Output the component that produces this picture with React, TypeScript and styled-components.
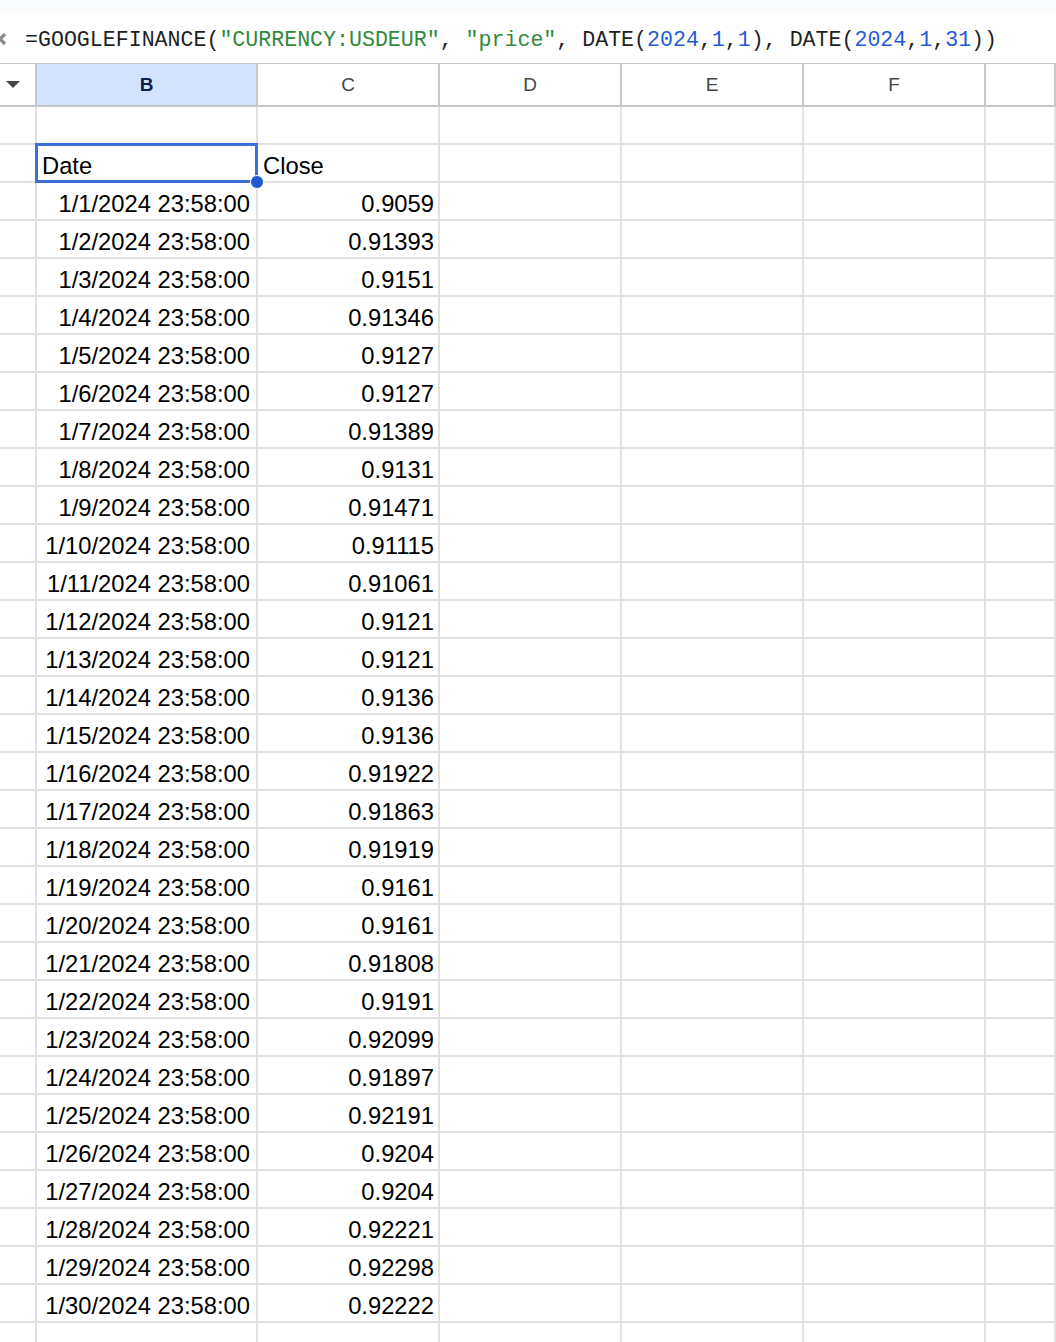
import React from "react";
import styled, { createGlobalStyle, css } from "styled-components";

const GlobalStyle = createGlobalStyle`
  html, body { margin: 0; padding: 0; background: #ffffff; }
  body { overflow: hidden; }
  * { box-sizing: border-box; }
`;

const Page = styled.div`
  width: 1056px;
  height: 1342px;
  overflow: hidden;
  background: #ffffff;
  font-family: "Liberation Sans", Arial, sans-serif;
`;

const TopStrip = styled.div`
  height: 13px;
  background: #f9fbfd;
`;

const FormulaBar = styled.div`
  height: 51px;
  display: flex;
  align-items: center;
  gap: 17px;
  padding-top: 3px;
  background: #ffffff;
  border-bottom: 1px solid #c7c7c7;
  font-family: "Liberation Mono", "DejaVu Sans Mono", monospace;
  font-size: 21.6px;
  color: #1f1f1f;
  white-space: nowrap;
`;

const FxClip = styled.div`
  width: 8px;
  height: 14px;
  overflow: hidden;
  flex: none;
  display: flex;
  justify-content: flex-end;
  margin-top: -2px;

  svg {
    flex: none;
  }
`;

const Tok = styled.span<{ $kind?: "str" | "num" }>`
  ${(p) =>
    p.$kind === "str" &&
    css`
      color: #318a3c;
    `}
  ${(p) =>
    p.$kind === "num" &&
    css`
      color: #1f5bd6;
    `}
`;

const Grid = styled.div`
  display: grid;
  grid-template-columns: 37px 221px 182px 182px 182px 182px 1fr;
  grid-template-rows: 43px;
  grid-auto-rows: 38px;
`;

const HeadCell = styled.div<{ $active?: boolean }>`
  height: 43px;
  border-right: 2px solid #c7c7c7;
  border-bottom: 2px solid #c7c7c7;
  display: flex;
  align-items: center;
  justify-content: center;
  font-size: 19px;
  color: #444746;
  background: ${(p) => (p.$active ? "#d3e3fd" : "#ffffff")};
  font-weight: ${(p) => (p.$active ? 700 : 400)};
  ${(p) =>
    p.$active &&
    css`
      color: #0b1f4c;
    `}
`;

const CornerCell = styled(HeadCell)`
  justify-content: flex-start;
  padding-left: 6px;
`;

const Cell = styled.div<{ $align?: "left" | "right"; $padRight?: number; $selected?: boolean }>`
  position: relative;
  height: 38px;
  border-right: 2px solid #e1e1e1;
  border-bottom: 2px solid #e1e1e1;
  display: flex;
  align-items: flex-end;
  justify-content: ${(p) => (p.$align === "right" ? "flex-end" : "flex-start")};
  padding: 0 ${(p) => p.$padRight ?? 5}px 1px 5px;
  font-size: 23.75px;
  color: #000000;
  white-space: nowrap;
  ${(p) =>
    p.$selected &&
    css`
      z-index: 2;
    `}
`;

const SelectionBox = styled.div`
  position: absolute;
  left: -2px;
  top: -2px;
  right: -2px;
  bottom: -2px;
  border: 3px solid #3d6fdb;
  pointer-events: none;
`;

const Handle = styled.div`
  position: absolute;
  right: -8.5px;
  bottom: -8.5px;
  width: 14px;
  height: 14px;
  border-radius: 50%;
  background: #1f5ad0;
  border: 1px solid #ffffff;
`;

const FxIcon = () => (
  <svg width="16" height="14" viewBox="0 0 16 14" aria-hidden="true">
    <path d="M3 2 L13 12 M13 2 L3 12" stroke="#8a8a8a" strokeWidth="3.2" fill="none" />
  </svg>
);

const Caret = () => (
  <svg width="14" height="8" viewBox="0 0 14 8" aria-hidden="true">
    <path d="M0 0 L14 0 L7 7 Z" fill="#444746" />
  </svg>
);

const closes = [
  "0.9059", "0.91393", "0.9151", "0.91346", "0.9127", "0.9127", "0.91389", "0.9131",
  "0.91471", "0.91115", "0.91061", "0.9121", "0.9121", "0.9136", "0.9136", "0.91922",
  "0.91863", "0.91919", "0.9161", "0.9161", "0.91808", "0.9191", "0.92099", "0.91897",
  "0.92191", "0.9204", "0.9204", "0.92221", "0.92298", "0.92222",
];

const EmptyCols = () => (
  <>
    <Cell />
    <Cell />
    <Cell />
    <Cell />
  </>
);

export default function App() {
  return (
    <Page>
      <GlobalStyle />
      <TopStrip />
      <FormulaBar>
        <FxClip>
          <FxIcon />
        </FxClip>
        <span>
          <Tok>=GOOGLEFINANCE(</Tok>
          <Tok $kind="str">"CURRENCY:USDEUR"</Tok>
          <Tok>, </Tok>
          <Tok $kind="str">"price"</Tok>
          <Tok>, DATE(</Tok>
          <Tok $kind="num">2024</Tok>
          <Tok>,</Tok>
          <Tok $kind="num">1</Tok>
          <Tok>,</Tok>
          <Tok $kind="num">1</Tok>
          <Tok>), DATE(</Tok>
          <Tok $kind="num">2024</Tok>
          <Tok>,</Tok>
          <Tok $kind="num">1</Tok>
          <Tok>,</Tok>
          <Tok $kind="num">31</Tok>
          <Tok>))</Tok>
        </span>
      </FormulaBar>
      <Grid>
        <CornerCell>
          <Caret />
        </CornerCell>
        <HeadCell $active>B</HeadCell>
        <HeadCell>C</HeadCell>
        <HeadCell>D</HeadCell>
        <HeadCell>E</HeadCell>
        <HeadCell>F</HeadCell>
        <HeadCell />

        <Cell />
        <Cell />
        <Cell />
        <EmptyCols />

        <Cell />
        <Cell $selected>
          Date
          <SelectionBox>
            <Handle />
          </SelectionBox>
        </Cell>
        <Cell>Close</Cell>
        <EmptyCols />

        {closes.map((c, i) => (
          <React.Fragment key={i}>
            <Cell />
            <Cell $align="right" $padRight={6}>{`1/${i + 1}/2024 23:58:00`}</Cell>
            <Cell $align="right" $padRight={4}>{c}</Cell>
            <EmptyCols />
          </React.Fragment>
        ))}

        <Cell />
        <Cell />
        <Cell />
        <EmptyCols />
      </Grid>
    </Page>
  );
}
